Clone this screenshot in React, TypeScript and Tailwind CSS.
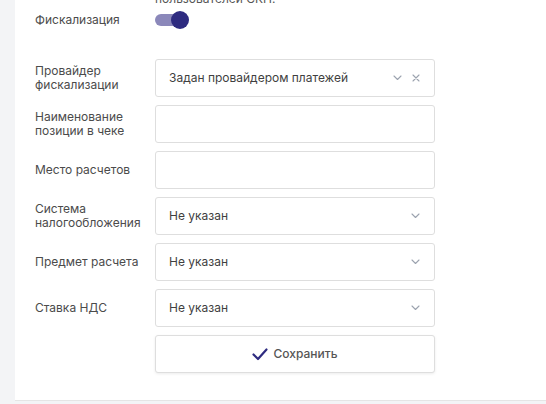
import React from 'react';

function Chevron() {
  return (
    <svg width="9" height="6" viewBox="0 0 9 6" fill="none" className="flex-none">
      <path d="M1 1l3.5 3.5L8 1" stroke="#9ca3af" strokeWidth="1.1" strokeLinecap="round" strokeLinejoin="round" />
    </svg>
  );
}

function Cross() {
  return (
    <svg width="8" height="8" viewBox="0 0 8 8" fill="none" className="flex-none">
      <path d="M1 1l6 6M7 1L1 7" stroke="#9ca3af" strokeWidth="1.1" strokeLinecap="round" />
    </svg>
  );
}

function Label({ children }: { children: React.ReactNode }) {
  return <div className="pr-2 text-[12px] leading-[14px] text-[#4b4b4b]">{children}</div>;
}

function Select({ value, clearable }: { value: string; clearable?: boolean }) {
  return (
    <div className="flex h-[38px] items-center rounded-[3px] border border-[#dedede] bg-white pl-[13px] pr-[14px] text-[12px] text-[#3f3f3f]">
      <span className="flex-1">{value}</span>
      <div className="flex items-center gap-[10px]">
        <Chevron />
        {clearable && <Cross />}
      </div>
    </div>
  );
}

function Input() {
  return <div className="h-[38px] rounded-[3px] border border-[#dedede] bg-white" />;
}

export default function App() {
  return (
    <div
      className="h-[404px] overflow-hidden bg-[#f3f4f6] pl-[15px]"
      style={{ fontFamily: 'Inter, "Noto Sans", sans-serif' }}
    >
      <div className="-mt-[8px] border-b border-[#e5e5e5] bg-white pb-[27px] pl-5">
        <div className="grid grid-cols-[120px_280px] items-center gap-y-2">
          <div />
          <div className="text-[12px] leading-[14px] text-[#555]">пользователей СКП.</div>

          <div className="mt-[-4px] text-[12px] text-[#4b4b4b]">Фискализация</div>
          <div className="mt-[-4px] flex h-[20px] items-center">
            <div className="relative h-[12px] w-[27px] rounded-full bg-[#8b88ba]">
              <div className="absolute -top-[3px] left-[16px] h-[18px] w-[18px] rounded-full bg-[#2e2b80]" />
            </div>
          </div>

          <div className="col-span-2 h-[13px]" />

          <Label>Провайдер фискализации</Label>
          <Select value="Задан провайдером платежей" clearable />

          <Label>Наименование позиции в чеке</Label>
          <Input />

          <Label>Место расчетов</Label>
          <Input />

          <Label>Система налогообложения</Label>
          <Select value="Не указан" />

          <Label>Предмет расчета</Label>
          <Select value="Не указан" />

          <Label>Ставка НДС</Label>
          <Select value="Не указан" />

          <div />
          <button
            type="button"
            className="flex h-[38px] items-center justify-center gap-[5px] rounded-[3px] border border-[#dedede] bg-white text-[12px] font-medium text-[#555] shadow-[0_1px_3px_rgba(0,0,0,0.08)]"
          >
            <svg width="16" height="13" viewBox="0 0 16 13" fill="none">
              <path d="M1.5 6.5l4.5 4.5L14.5 1.5" stroke="#2e2b80" strokeWidth="2.2" strokeLinecap="round" strokeLinejoin="round" />
            </svg>
            Сохранить
          </button>
        </div>
      </div>
    </div>
  );
}
